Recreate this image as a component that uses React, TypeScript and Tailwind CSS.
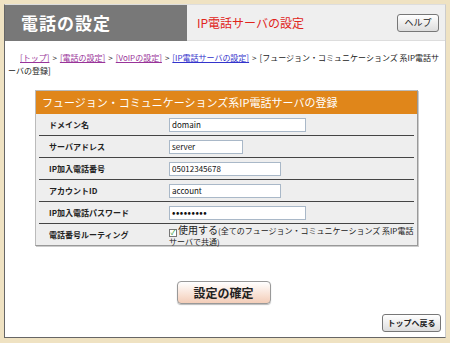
import React from 'react'

const rows: { label: string; value: string; width: string; password?: boolean }[] = [
  { label: 'ドメイン名', value: 'domain', width: 'w-[137px]' },
  { label: 'サーバアドレス', value: 'server', width: 'w-[74px]' },
  { label: 'IP加入電話番号', value: '05012345678', width: 'w-[112px]' },
  { label: 'アカウントID', value: 'account', width: 'w-[112px]' },
  { label: 'IP加入電話パスワード', value: '•••••••••', width: 'w-[137px]', password: true },
]

const crumbs = [
  { text: '[トップ]', color: 'text-[#993399]' },
  { text: '[電話の設定]', color: 'text-[#993399]' },
  { text: '[VoIPの設定]', color: 'text-[#993399]' },
  { text: '[IP電話サーバの設定]', color: 'text-[#3333cc]' },
]

export default function App() {
  return (
    <div
      className="w-[450px] h-[343px] bg-[#efe2c2] p-[4px] pb-[5px] overflow-hidden"
      style={{ fontFamily: '"Noto Sans CJK JP", "Noto Sans", sans-serif' }}
    >
      <div className="h-full flex flex-col bg-white border-l border-b border-[#666] border-t border-r border-t-[#ddd] border-r-[#ccc]">
        {/* Header */}
        <div className="flex h-[36px] shrink-0">
          <div className="w-[182px] bg-[#787878] flex items-center pl-[16px]">
            <span className="text-white text-[17px] font-bold tracking-[1px]">電話の設定</span>
          </div>
          <div className="flex-1 bg-[#efefef] flex items-center justify-between pl-[10px] pr-[6px] border-b border-[#ddd]">
            <span className="text-[#e0251b] text-[12px]">IP電話サーバの設定</span>
            <button className="w-[42px] h-[18px] rounded-[3px] border border-[#777] bg-gradient-to-b from-white to-[#ddd] text-[9px] text-[#222] leading-none">
              ヘルプ
            </button>
          </div>
        </div>

        {/* Breadcrumb */}
        <p className="pl-[3px] pr-[3px] pt-[10px] text-[8px] leading-[13px] text-[#222]">
          <span className="inline-block w-[12px]" />
          {crumbs.map((c) => (
            <React.Fragment key={c.text}>
              <a className={`${c.color} underline`}>{c.text}</a>
              <span className="mx-[3px]">&gt;</span>
            </React.Fragment>
          ))}
          [フュージョン・コミュニケーションズ 系IP電話サーバの登録]
        </p>

        {/* Form box */}
        <div className="mt-[13px] ml-[30px] w-[383px] border border-[#bbb] border-r-[#999] border-b-[#999] shadow-[1px_1px_0_#ccc] bg-[#eeeeee]">
          <div className="h-[23px] bg-[#e0861a] flex items-center pl-[6px] text-white text-[11px]">
            フュージョン・コミュニケーションズ系IP電話サーバの登録
          </div>
          <div className="px-[3px]">
            {rows.map((r) => (
              <div key={r.label} className="flex items-center h-[22px] border-b border-[#444]">
                <div className="w-[130px] pl-[10px] text-[8px] font-bold text-[#222]">{r.label}</div>
                <div
                  className={`${r.width} h-[14px] bg-white border border-[#a9b8c8] flex items-center px-[2px] text-[8px] text-[#111] ${r.password ? 'font-bold tracking-[0.5px] text-[9px]' : ''}`}
                >
                  {r.value}
                </div>
              </div>
            ))}
            <div className="flex h-[21px] pt-[1px]">
              <div className="w-[130px] pl-[10px] text-[8px] font-bold text-[#222] pt-[4px]">電話番号ルーティング</div>
              <div className="flex-1 text-[8px] leading-[10px] text-[#222]">
                <span className="inline-flex items-center justify-center w-[8px] h-[8px] border border-[#777] bg-white text-[#2a9a2a] text-[7px] leading-none mr-[1px] align-[-1px]">✓</span>
                <span className="text-[10px]">使用する</span>(全てのフュージョン・コミュニケーションズ 系IP電話サーバで共通)
              </div>
            </div>
          </div>
        </div>

        {/* Confirm */}
        <div className="flex justify-center mt-[35px]">
          <button className="w-[94px] h-[23px] rounded-[4px] border border-[#999] bg-gradient-to-b from-white to-[#f3cdb8] text-[12px] font-bold text-[#222] shadow-[0_1px_1px_#bbb] ml-[-3px]">
            設定の確定
          </button>
        </div>

        {/* Back */}
        <div className="flex justify-end mt-auto pb-[5px] pr-[4px]">
          <button className="w-[59px] h-[18px] rounded-[3px] border border-[#777] bg-gradient-to-b from-white to-[#ddd] text-[8px] font-bold text-[#222] leading-none">
            トップへ戻る
          </button>
        </div>
      </div>
    </div>
  )
}
